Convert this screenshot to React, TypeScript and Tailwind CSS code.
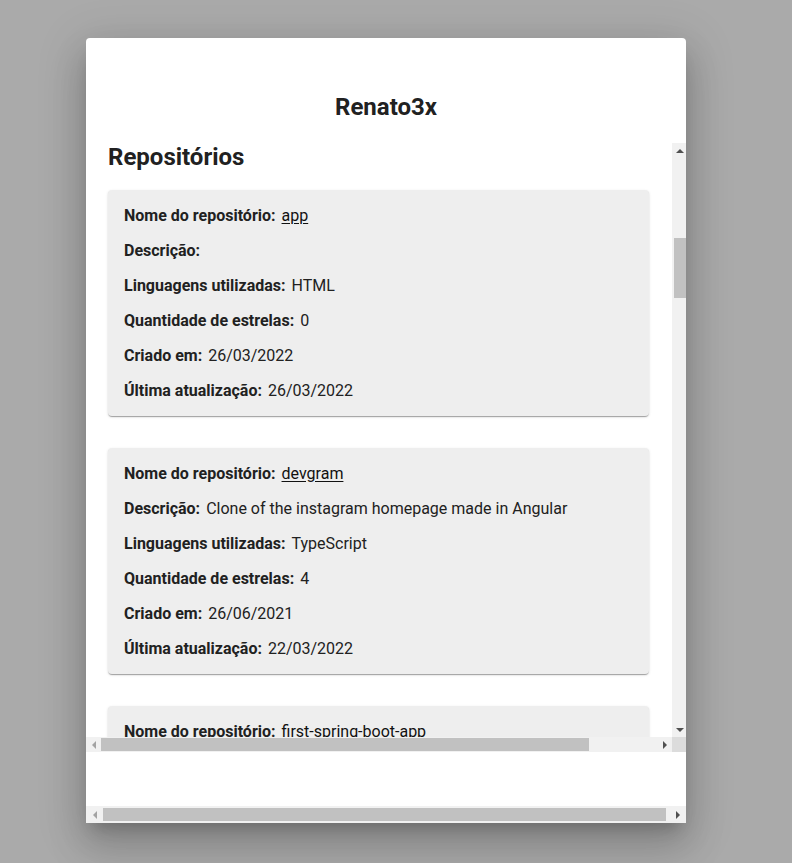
import React from "react";

type Repo = {
  name: string;
  description: string;
  languages: string;
  stars: number;
  created: string;
  updated: string;
};

const repos: Repo[] = [
  {
    name: "app",
    description: "",
    languages: "HTML",
    stars: 0,
    created: "26/03/2022",
    updated: "26/03/2022",
  },
  {
    name: "devgram",
    description: "Clone of the instagram homepage made in Angular",
    languages: "TypeScript",
    stars: 4,
    created: "26/06/2021",
    updated: "22/03/2022",
  },
  {
    name: "first-spring-boot-app",
    description: "",
    languages: "Java",
    stars: 0,
    created: "20/03/2022",
    updated: "20/03/2022",
  },
];

const Row = ({ label, children }: { label: string; children?: React.ReactNode }) => (
  <div className="h-[35px] flex items-center gap-[6px] text-[16px] text-[#212121] whitespace-nowrap">
    <span className="font-bold">{label}</span>
    <span className="font-normal">{children}</span>
  </div>
);

const RepoCard = ({ repo }: { repo: Repo }) => (
  <div className="w-[541px] shrink-0 bg-[#eeeeee] rounded-[4px] px-4 py-2 shadow-[0px_2px_1px_-1px_rgba(0,0,0,0.2),0px_1px_1px_0px_rgba(0,0,0,0.14),0px_1px_3px_0px_rgba(0,0,0,0.12)]">
    <Row label="Nome do repositório:">
      <a href="#" className="underline underline-offset-2 text-[#111]">
        {repo.name}
      </a>
    </Row>
    <Row label="Descrição:">{repo.description}</Row>
    <Row label="Linguagens utilizadas:">{repo.languages}</Row>
    <Row label="Quantidade de estrelas:">{repo.stars}</Row>
    <Row label="Criado em:">{repo.created}</Row>
    <Row label="Última atualização:">{repo.updated}</Row>
  </div>
);

const ArrowUp = () => (
  <div className="w-0 h-0 border-x-[4px] border-x-transparent border-b-[4px] border-b-[#505050]" />
);
const ArrowDown = () => (
  <div className="w-0 h-0 border-x-[4px] border-x-transparent border-t-[4px] border-t-[#505050]" />
);
const ArrowLeft = () => (
  <div className="w-0 h-0 border-y-[4px] border-y-transparent border-r-[4px] border-r-[#a3a3a3]" />
);
const ArrowRight = () => (
  <div className="w-0 h-0 border-y-[4px] border-y-transparent border-l-[4px] border-l-[#505050]" />
);

export default function App() {
  return (
    <div
      className="w-[792px] h-[863px] bg-[#aaaaaa] overflow-hidden"
      style={{ fontFamily: "Roboto, 'Liberation Sans', sans-serif" }}
    >
      <div className="ml-[86px] mt-[38px] w-[600px] h-[785px] bg-white rounded-t-[4px] flex flex-col overflow-hidden shadow-[0px_11px_15px_-7px_rgba(0,0,0,0.2),0px_24px_38px_3px_rgba(0,0,0,0.14),0px_9px_46px_8px_rgba(0,0,0,0.12)]">
        {/* header */}
        <div className="h-[105px] shrink-0 pt-[55px]">
          <h1 className="text-center text-[24px] leading-[28px] font-bold text-[#212121]">Renato3x</h1>
        </div>

        {/* scroll area */}
        <div className="h-[609px] shrink-0 flex flex-col">
          <div className="flex h-[594px]">
            <div className="w-[586px] overflow-hidden pl-[22px]">
              <h2 className="text-[24px] leading-[28px] font-bold text-[#212121]">Repositórios</h2>
              <div className="mt-[19px] flex flex-col gap-8">
                {repos.map((r) => (
                  <RepoCard key={r.name} repo={r} />
                ))}
              </div>
            </div>
            {/* vertical scrollbar */}
            <div className="w-[14px] bg-[#f1f1f1] flex flex-col">
              <div className="h-[15px] flex items-center justify-center pl-[1px]">
                <ArrowUp />
              </div>
              <div className="flex-1 pt-[80px] pl-[2px]">
                <div className="h-[60px] bg-[#c1c1c1]" />
              </div>
              <div className="h-[15px] flex items-center justify-center pl-[1px]">
                <ArrowDown />
              </div>
            </div>
          </div>
          {/* horizontal scrollbar */}
          <div className="flex h-[15px]">
            <div className="w-[586px] bg-[#f1f1f1] flex items-center">
              <div className="w-[15px] flex justify-center">
                <ArrowLeft />
              </div>
              <div className="flex-1 h-[13px]">
                <div className="w-[488px] h-[13px] bg-[#c1c1c1]" />
              </div>
              <div className="w-[15px] flex justify-center">
                <ArrowRight />
              </div>
            </div>
            <div className="w-[14px] bg-[#dcdcdc]" />
          </div>
        </div>

        <div className="flex-1" />

        {/* outer horizontal scrollbar */}
        <div className="h-[17px] shrink-0 bg-[#f1f1f1] flex items-center">
          <div className="w-[17px] flex justify-center">
            <ArrowLeft />
          </div>
          <div className="flex-1 h-[13px]">
            <div className="w-[563px] h-[13px] bg-[#c1c1c1]" />
          </div>
          <div className="w-[17px] flex justify-center">
            <ArrowRight />
          </div>
        </div>
      </div>
    </div>
  );
}
